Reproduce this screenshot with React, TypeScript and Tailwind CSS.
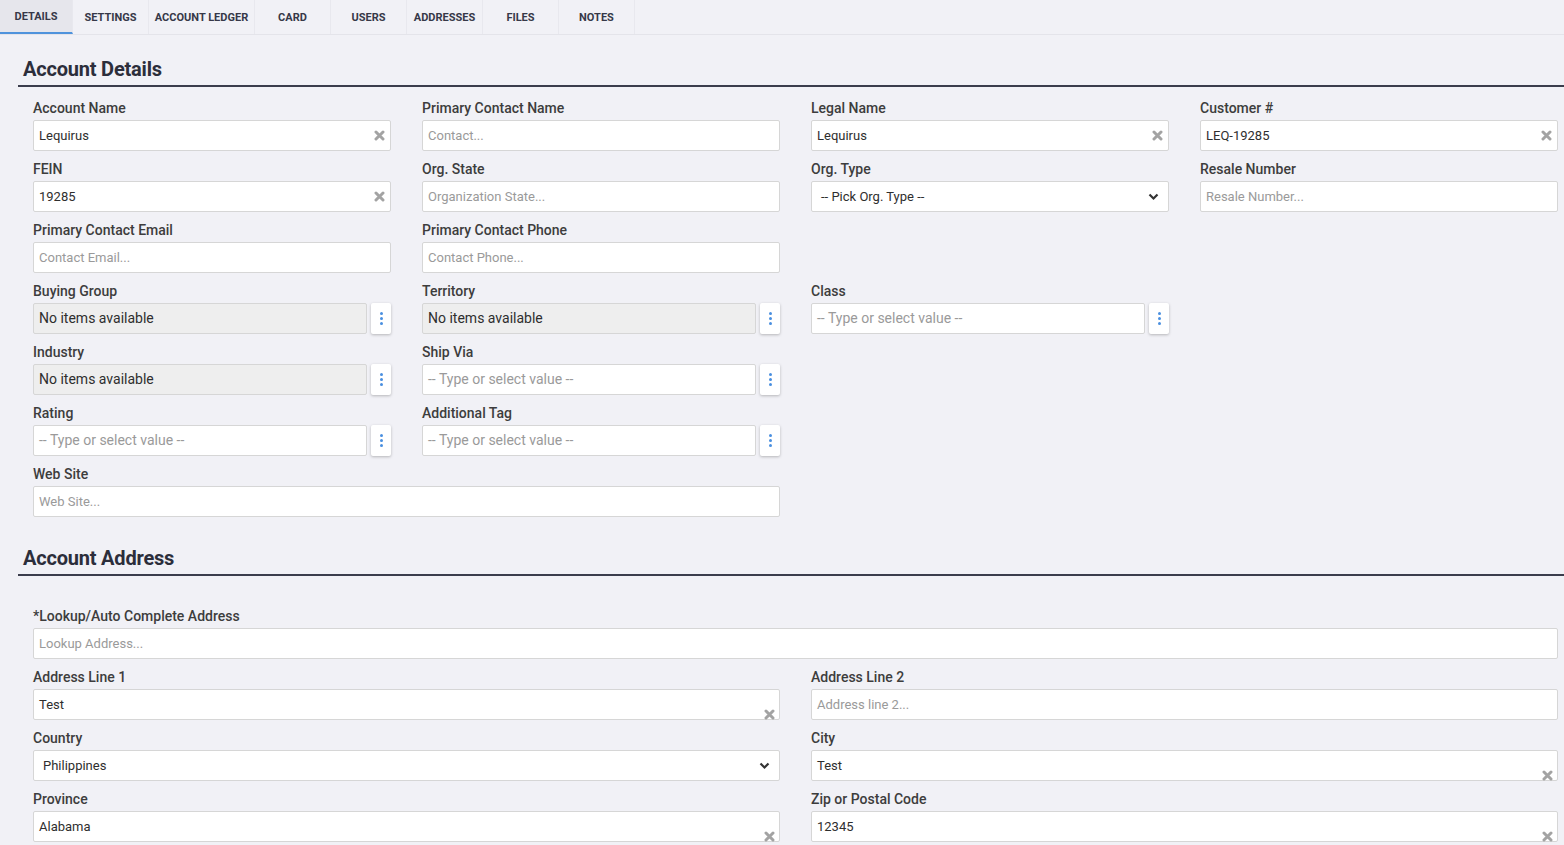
import React from 'react'

const tabs = [
  { label: 'DETAILS', w: 'w-[73px]', active: true },
  { label: 'SETTINGS', w: 'w-[76px]' },
  { label: 'ACCOUNT LEDGER', w: 'w-[106px]' },
  { label: 'CARD', w: 'w-[76px]' },
  { label: 'USERS', w: 'w-[76px]' },
  { label: 'ADDRESSES', w: 'w-[76px]' },
  { label: 'FILES', w: 'w-[76px]' },
  { label: 'NOTES', w: 'w-[76px]' },
]

function ClearIcon() {
  return (
    <svg width="11" height="11" viewBox="0 0 11 11">
      <path d="M2 2 L9 9 M9 2 L2 9" stroke="#a3a3a3" strokeWidth="3" strokeLinecap="round" />
    </svg>
  )
}

function Chevron() {
  return (
    <svg width="11" height="8" viewBox="0 0 11 8">
      <path d="M1.5 1.5 L5.5 5.5 L9.5 1.5" stroke="#333" strokeWidth="2.2" fill="none" />
    </svg>
  )
}

function Label({ children }: { children: React.ReactNode }) {
  return <div className="h-5 leading-5 text-[14px] font-medium text-[#3d3d3d] mb-[2px]">{children}</div>
}

function TextInput({
  value,
  placeholder,
  clear,
  clearLow,
}: {
  value?: string
  placeholder?: string
  clear?: boolean
  clearLow?: boolean
}) {
  return (
    <div className="relative h-[31px] bg-white border border-[#d6d6d6] rounded-[2px] flex items-center px-[5px] text-[13px]">
      {value ? (
        <span className="text-[#2e2e2e]">{value}</span>
      ) : (
        <span className="text-[#9a9a9a]">{placeholder}</span>
      )}
      {clear && (
        <span className="absolute right-[5px] top-[9px] flex">
          <ClearIcon />
        </span>
      )}
      {clearLow && (
        <span className="absolute right-[4px] bottom-[-1px] flex">
          <ClearIcon />
        </span>
      )}
    </div>
  )
}

function SelectInput({ value }: { value: string }) {
  return (
    <div className="h-[31px] bg-white border border-[#d6d6d6] rounded-[2px] flex items-center justify-between px-[9px] text-[13px] text-[#2e2e2e]">
      <span>{value}</span>
      <Chevron />
    </div>
  )
}

function DotsButton() {
  return (
    <div className="w-[20px] h-[31px] bg-white rounded-[2px] shadow-[0_1px_3px_rgba(0,0,0,0.25)] flex flex-col items-center justify-center gap-[2px]">
      <span className="w-[3px] h-[3px] rounded-full bg-[#4a8fe0]" />
      <span className="w-[3px] h-[3px] rounded-full bg-[#4a8fe0]" />
      <span className="w-[3px] h-[3px] rounded-full bg-[#4a8fe0]" />
    </div>
  )
}

function ComboInput({ empty }: { empty?: boolean }) {
  return (
    <div className="flex gap-[4px]">
      {empty ? (
        <div className="flex-1 h-[31px] bg-[#eeeeee] border border-[#d6d6d6] rounded-[2px] flex items-center px-[5px] text-[14px] text-[#2e2e2e]">
          No items available
        </div>
      ) : (
        <div className="flex-1 h-[31px] bg-white border border-[#d6d6d6] rounded-[2px] flex items-center px-[5px] text-[14px] text-[#9a9a9a]">
          -- Type or select value --
        </div>
      )}
      <DotsButton />
    </div>
  )
}

function Field({ label, children, className = '' }: { label: string; children: React.ReactNode; className?: string }) {
  return (
    <div className={`mb-2 ${className}`}>
      <Label>{label}</Label>
      {children}
    </div>
  )
}

function SectionHeading({ title }: { title: string }) {
  return (
    <div className="ml-[18px] border-b-2 border-[#3b3d4c]">
      <h2 className="pl-[5px] h-[30px] leading-[28px] text-[20px] font-bold text-[#2c2e3b] tracking-[-0.2px]">{title}</h2>
    </div>
  )
}

export default function App() {
  return (
    <div className="min-h-screen w-full bg-[#f1f1f6] overflow-hidden" style={{ fontFamily: 'Roboto, "Liberation Sans", sans-serif' }}>
      <div className="flex h-[35px] border-b border-[#e4e4ea]">
        {tabs.map((t) => (
          <div
            key={t.label}
            className={`${t.w} h-[34px] flex items-center justify-center pt-[3px] text-[11px] font-bold text-[#363848] border-r border-[#e8e8ee] ${
              t.active ? 'bg-[#e6e6ec] border-b-2 border-b-[#4f93dc]' : ''
            }`}
          >
            {t.label}
          </div>
        ))}
      </div>

      <div className="mt-[20px]">
        <SectionHeading title="Account Details" />
      </div>

      <div className="grid grid-cols-4 gap-x-[31px] pl-[33px] pr-[6px] mt-[11px]">
        <Field label="Account Name">
          <TextInput value="Lequirus" clear />
        </Field>
        <Field label="Primary Contact Name">
          <TextInput placeholder="Contact..." />
        </Field>
        <Field label="Legal Name">
          <TextInput value="Lequirus" clear />
        </Field>
        <Field label="Customer #">
          <TextInput value="LEQ-19285" clear />
        </Field>

        <Field label="FEIN">
          <TextInput value="19285" clear />
        </Field>
        <Field label="Org. State">
          <TextInput placeholder="Organization State..." />
        </Field>
        <Field label="Org. Type">
          <SelectInput value="-- Pick Org. Type --" />
        </Field>
        <Field label="Resale Number">
          <TextInput placeholder="Resale Number..." />
        </Field>

        <Field label="Primary Contact Email">
          <TextInput placeholder="Contact Email..." />
        </Field>
        <Field label="Primary Contact Phone">
          <TextInput placeholder="Contact Phone..." />
        </Field>
        <div />
        <div />

        <Field label="Buying Group">
          <ComboInput empty />
        </Field>
        <Field label="Territory">
          <ComboInput empty />
        </Field>
        <Field label="Class">
          <ComboInput />
        </Field>
        <div />

        <Field label="Industry">
          <ComboInput empty />
        </Field>
        <Field label="Ship Via">
          <ComboInput />
        </Field>
        <div />
        <div />

        <Field label="Rating">
          <ComboInput />
        </Field>
        <Field label="Additional Tag">
          <ComboInput />
        </Field>
        <div />
        <div />

        <Field label="Web Site" className="col-span-2">
          <TextInput placeholder="Web Site..." />
        </Field>
      </div>

      <div className="mt-[19px]">
        <SectionHeading title="Account Address" />
      </div>

      <div className="grid grid-cols-2 gap-x-[31px] pl-[33px] pr-[6px] mt-[30px]">
        <Field label="*Lookup/Auto Complete Address" className="col-span-2">
          <TextInput placeholder="Lookup Address..." />
        </Field>
        <Field label="Address Line 1">
          <TextInput value="Test" clearLow />
        </Field>
        <Field label="Address Line 2">
          <TextInput placeholder="Address line 2..." />
        </Field>
        <Field label="Country">
          <SelectInput value="Philippines" />
        </Field>
        <Field label="City">
          <TextInput value="Test" clearLow />
        </Field>
        <Field label="Province">
          <TextInput value="Alabama" clearLow />
        </Field>
        <Field label="Zip or Postal Code">
          <TextInput value="12345" clearLow />
        </Field>
      </div>
    </div>
  )
}
